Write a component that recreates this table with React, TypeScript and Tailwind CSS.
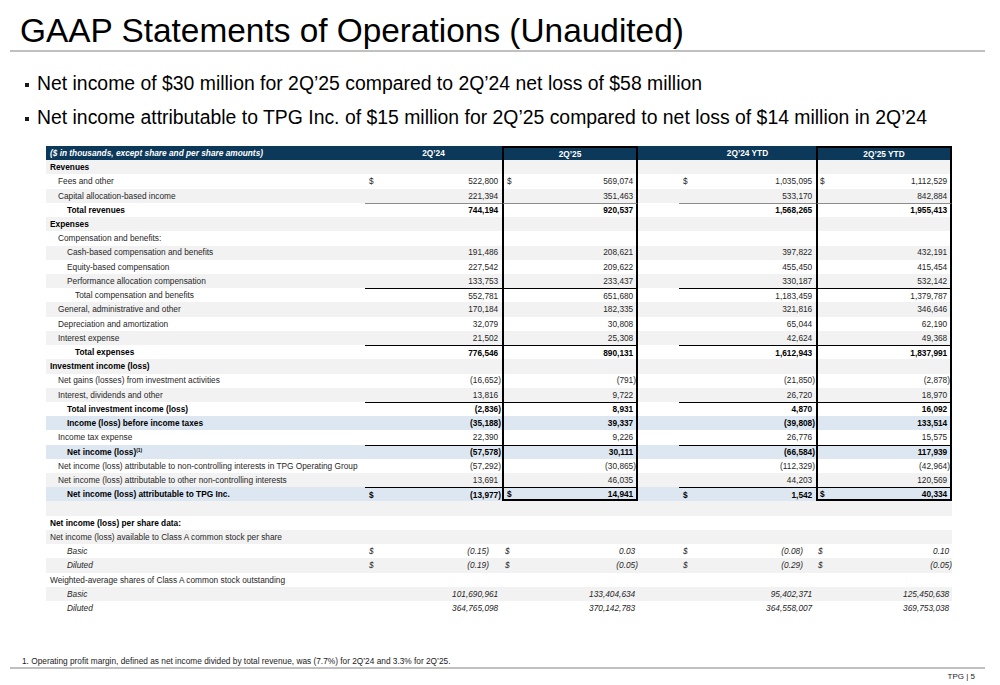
import React from "react";

type Bg = "g" | "w" | "b";
type Row = {
  label: string;
  pl: number;
  bold?: boolean;
  italic?: boolean;
  bg: Bg;
  vals?: string[];
  dollars?: boolean;
  top?: "gray" | "black";
  sup?: string;
  kind?: "ps";
};

const rows: Row[] = [
  { label: "Revenues", pl: 4, bold: true, bg: "g" },
  { label: "Fees and other", pl: 12, bg: "w", dollars: true, vals: ["522,800", "569,074", "1,035,095", "1,112,529"] },
  { label: "Capital allocation-based income", pl: 12, bg: "g", vals: ["221,394", "351,463", "533,170", "842,884"] },
  { label: "Total revenues", pl: 21, bold: true, bg: "w", top: "gray", vals: ["744,194", "920,537", "1,568,265", "1,955,413"] },
  { label: "Expenses", pl: 4, bold: true, bg: "g" },
  { label: "Compensation and benefits:", pl: 12, bg: "w" },
  { label: "Cash-based compensation and benefits", pl: 21, bg: "g", vals: ["191,486", "208,621", "397,822", "432,191"] },
  { label: "Equity-based compensation", pl: 21, bg: "w", vals: ["227,542", "209,622", "455,450", "415,454"] },
  { label: "Performance allocation compensation", pl: 21, bg: "g", vals: ["133,753", "233,437", "330,187", "532,142"] },
  { label: "Total compensation and benefits", pl: 29, bg: "w", top: "black", vals: ["552,781", "651,680", "1,183,459", "1,379,787"] },
  { label: "General, administrative and other", pl: 12, bg: "g", vals: ["170,184", "182,335", "321,816", "346,646"] },
  { label: "Depreciation and amortization", pl: 12, bg: "w", vals: ["32,079", "30,808", "65,044", "62,190"] },
  { label: "Interest expense", pl: 12, bg: "g", vals: ["21,502", "25,308", "42,624", "49,368"] },
  { label: "Total expenses", pl: 29, bold: true, bg: "w", top: "black", vals: ["776,546", "890,131", "1,612,943", "1,837,991"] },
  { label: "Investment income (loss)", pl: 4, bold: true, bg: "g" },
  { label: "Net gains (losses) from investment activities", pl: 12, bg: "w", vals: ["(16,652)", "(791)", "(21,850)", "(2,878)"] },
  { label: "Interest, dividends and other", pl: 12, bg: "g", vals: ["13,816", "9,722", "26,720", "18,970"] },
  { label: "Total investment income (loss)", pl: 21, bold: true, bg: "w", top: "black", vals: ["(2,836)", "8,931", "4,870", "16,092"] },
  { label: "Income (loss) before income taxes", pl: 21, bold: true, bg: "b", vals: ["(35,188)", "39,337", "(39,808)", "133,514"] },
  { label: "Income tax expense", pl: 12, bg: "w", vals: ["22,390", "9,226", "26,776", "15,575"] },
  { label: "Net income (loss)", sup: "(1)", pl: 21, bold: true, bg: "b", top: "black", vals: ["(57,578)", "30,111", "(66,584)", "117,939"] },
  { label: "Net income (loss) attributable to non-controlling interests in TPG Operating Group", pl: 12, bg: "w", vals: ["(57,292)", "(30,865)", "(112,329)", "(42,964)"] },
  { label: "Net income (loss) attributable to other non-controlling interests", pl: 12, bg: "g", vals: ["13,691", "46,035", "44,203", "120,569"] },
  { label: "Net income (loss) attributable to TPG Inc.", pl: 21, bold: true, bg: "b", top: "black", dollars: true, vals: ["(13,977)", "14,941", "1,542", "40,334"] },
  { label: "", pl: 4, bg: "g" },
  { label: "Net income (loss) per share data:", pl: 4, bold: true, bg: "w" },
  { label: "Net income (loss) available to Class A common stock per share", pl: 4, bg: "g" },
  { label: "Basic", pl: 21, italic: true, bg: "w", dollars: true, kind: "ps", vals: ["(0.15)", "0.03", "(0.08)", "0.10"] },
  { label: "Diluted", pl: 21, italic: true, bg: "g", dollars: true, kind: "ps", vals: ["(0.19)", "(0.05)", "(0.29)", "(0.05)"] },
  { label: "Weighted-average shares of Class A common stock outstanding", pl: 4, bg: "w" },
  { label: "Basic", pl: 21, italic: true, bg: "g", vals: ["101,690,961", "133,404,634", "95,402,371", "125,450,638"] },
  { label: "Diluted", pl: 21, italic: true, bg: "w", vals: ["364,765,098", "370,142,783", "364,558,007", "369,753,038"] },
];

const bgClass: Record<Bg, string> = {
  g: "bg-[#f2f2f2]",
  w: "bg-white",
  b: "bg-[#dde7f2]",
};

const plClass: Record<number, string> = {
  4: "pl-[4px]",
  12: "pl-[12px]",
  21: "pl-[21px]",
  29: "pl-[29px]",
};

const colW = ["w-[137px]", "w-[136px]", "w-[137px]", "w-[136px]"];
const isBox = [false, true, false, true];
const dollarPl = ["pl-[4px]", "pl-[3px]", "pl-[4px]", "pl-[2px]"];

function NumCell({ row, idx, ci }: { row: Row; idx: number; ci: number }) {
  const box = isBox[ci] && idx <= 23;
  const last = isBox[ci] && idx === 23;
  const v = row.vals ? row.vals[ci] : "";
  let pr = "pr-[1px]";
  if (isBox[ci]) pr = "pr-0";
  if (row.kind === "ps" && !isBox[ci]) pr = "pr-[13px]";
  const topLine =
    row.top === "gray"
      ? "border-t border-t-[#8c8c8c]"
      : row.top === "black"
      ? "border-t border-t-black"
      : "";
  return (
    <div
      className={`flex h-full items-center justify-between ${colW[ci]} ${dollarPl[ci]} ${pr} ${topLine} ${
        box ? "border-x-2 border-x-black" : ""
      } ${last ? "border-b-2 border-b-black" : ""}`}
    >
      <span>{row.dollars ? "$" : ""}</span>
      <span>
        {v}
        {v && !v.startsWith("(") ? <span className="invisible">)</span> : null}
      </span>
    </div>
  );
}

function Gap({ ci }: { ci: number }) {
  return ci === 2 ? <div className="h-full w-[41px]" /> : null;
}

export default function App() {
  return (
    <div className="relative h-[685px] w-[1000px] overflow-hidden bg-white font-['Liberation_Sans',Arial,sans-serif] text-black">
      <div className="pl-[20px] pt-[12px] text-[33.4px] leading-[38px] text-black">
        GAAP Statements of Operations (Unaudited)
      </div>
      <div className="ml-[10px] h-[2px] w-[975px] bg-[#c0c0c0]" />

      <div className="mt-[14px] text-[19.4px] leading-[34px] text-black">
        <div className="flex h-[34px] items-center pl-[25px]">
          <span className="mr-[8px] mt-[3px] h-[4px] w-[4px] shrink-0 bg-[#1a1a1a]" />
          <span>Net income of $30 million for 2Q’25 compared to 2Q’24 net loss of $58 million</span>
        </div>
        <div className="flex h-[34px] items-center pl-[25px]">
          <span className="mr-[8px] mt-[3px] h-[4px] w-[4px] shrink-0 bg-[#1a1a1a]" />
          <span>
            Net income attributable to TPG Inc. of $15 million for 2Q’25 compared to net loss of $14 million in 2Q’24
          </span>
        </div>
      </div>

      <div className="ml-[46px] mt-[12px] w-[906px] text-[8.3px] leading-none text-[#262626]">
        <div className="flex h-[14.22px] bg-[#0c385a] font-bold text-white">
          <div className="flex h-full w-[319px] items-center pl-[4px] italic">
            ($ in thousands, except share and per share amounts)
          </div>
          {["2Q’24", "2Q’25", "2Q’24 YTD", "2Q’25 YTD"].map((h, ci) => (
            <React.Fragment key={h}>
              <Gap ci={ci} />
              <div
                className={`flex h-full items-center justify-center ${colW[ci]} ${
                  isBox[ci] ? "border-x-2 border-t-2 border-x-black border-t-black" : ""
                }`}
              >
                {h}
              </div>
            </React.Fragment>
          ))}
        </div>
        {rows.map((row, idx) => (
          <div
            key={idx}
            className={`flex h-[14.22px] ${bgClass[row.bg]} ${row.bold ? "font-bold text-black" : ""} ${
              row.italic ? "italic" : ""
            }`}
          >
            <div className={`flex h-full w-[319px] items-center whitespace-nowrap ${plClass[row.pl]}`}>
              {row.label}
              {row.sup ? <sup className="relative -top-[2px] text-[5px]">{row.sup}</sup> : null}
            </div>
            {[0, 1, 2, 3].map((ci) => (
              <React.Fragment key={ci}>
                <Gap ci={ci} />
                <NumCell row={row} idx={idx} ci={ci} />
              </React.Fragment>
            ))}
          </div>
        ))}
      </div>

      <div className="mt-[41px] pl-[22px] text-[8.3px] leading-[10px] text-[#1a1a1a]">
        1. Operating profit margin, defined as net income divided by total revenue, was (7.7%) for 2Q’24 and 3.3% for 2Q’25.
      </div>
      <div className="ml-[10px] mt-[1px] h-[2px] w-[975px] bg-[#c0c0c0]" />
      <div className="mt-[3px] w-[975px] text-right text-[8px] leading-[10px] text-[#1a1a1a]">TPG | 5</div>
    </div>
  );
}
